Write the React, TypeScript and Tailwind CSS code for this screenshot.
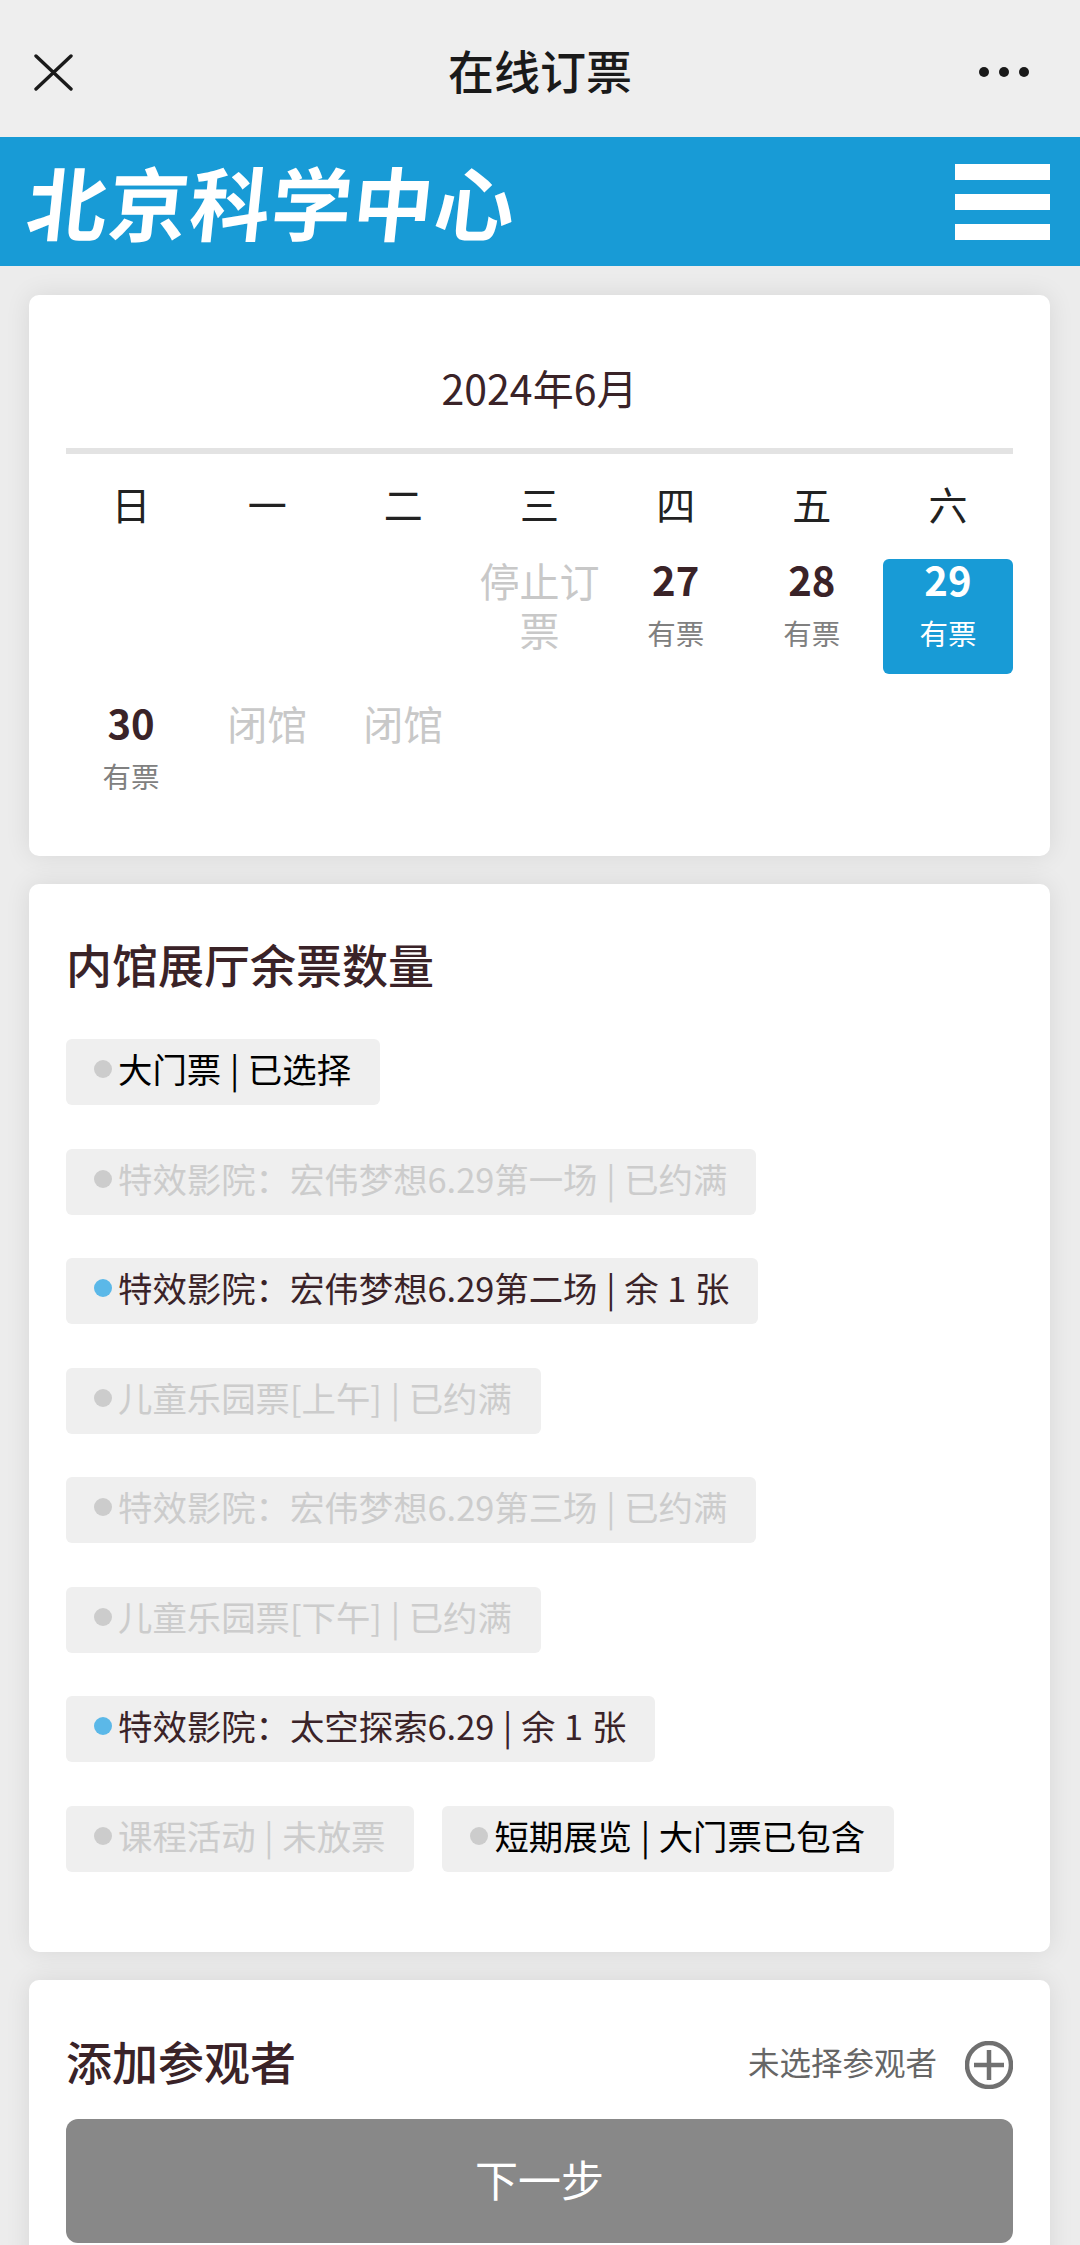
const days = ["日", "一", "二", "三", "四", "五", "六"];

type Tag = { label: string; state: "on" | "off" | "open" };

const tags: Tag[] = [
  { label: "大门票 | 已选择", state: "on" },
  { label: "特效影院：宏伟梦想6.29第一场 | 已约满", state: "off" },
  { label: "特效影院：宏伟梦想6.29第二场 | 余 1 张", state: "open" },
  { label: "儿童乐园票[上午] | 已约满", state: "off" },
  { label: "特效影院：宏伟梦想6.29第三场 | 已约满", state: "off" },
  { label: "儿童乐园票[下午] | 已约满", state: "off" },
  { label: "特效影院：太空探索6.29 | 余 1 张", state: "open" },
  { label: "课程活动 | 未放票", state: "off" },
  { label: "短期展览 | 大门票已包含", state: "on" },
];

function Day({ n, active }: { n: string; active?: boolean }) {
  return (
    <div className={`h-[115px] rounded-[6px] text-center ${active ? "bg-[#189bd6] text-white" : "text-[#3a2328]"}`}>
      <div className="text-[40px] leading-[40px] font-bold">{n}</div>
      <div className={`mt-[16px] text-[28.5px] leading-[36px] ${active ? "text-white" : "text-[#808080]"}`}>有票</div>
    </div>
  );
}

function Closed({ text }: { text: string }) {
  return <div className="-mt-[3px] h-[115px] text-center text-[40px] leading-[49px] text-[#c8c8c8]">{text}</div>;
}

function TagPill({ tag }: { tag: Tag }) {
  const text = tag.state === "on" ? "text-black" : tag.state === "open" ? "text-[#3a2328]" : "text-[#cccccc]";
  return (
    <div className={`flex h-[66px] items-start rounded-[6px] bg-[#efefef] pl-[28px] pr-[29px] pt-[9px] text-[34.4px] leading-[40px] [word-spacing:1px] ${text}`}>
      <span className={`mr-[6px] mt-[12px] h-[18px] w-[18px] shrink-0 rounded-full ${tag.state === "open" ? "bg-[#5bb8e8]" : "bg-[#cccccc]"}`} />
      <span className="whitespace-pre">{tag.label}</span>
    </div>
  );
}

export default function App() {
  return (
    <div className="h-[2245px] overflow-hidden bg-[#ececec] font-['Noto_Sans_CJK_SC','Noto_Sans',sans-serif]">
      <nav className="flex h-[137px] items-center bg-[#eeeeee] px-[34px] pt-[7px]">
        <div className="flex-1">
          <svg width="39" height="37" viewBox="0 0 39 37" fill="none" stroke="#1a1a1a" strokeWidth="3.4" strokeLinecap="round">
            <path d="M2 2L37 35M37 2L2 35" />
          </svg>
        </div>
        <h1 className="mb-[6px] text-[46px] font-medium leading-[56px] text-[#1a1a1a]">在线订票</h1>
        <div className="flex flex-1 justify-end">
          <div className="mr-[17px] flex gap-[10px]">
            <span className="h-[10px] w-[10px] rounded-full bg-[#1a1a1a]" />
            <span className="h-[10px] w-[10px] rounded-full bg-[#1a1a1a]" />
            <span className="h-[10px] w-[10px] rounded-full bg-[#1a1a1a]" />
          </div>
        </div>
      </nav>

      <header className="flex h-[129px] items-center justify-between bg-[#189bd6] pl-[28px] pr-[30px]">
        <div className="-mt-[4px] -skew-x-6 text-[80px] font-bold leading-[90px] tracking-[1.5px] text-white">北京科学中心</div>
        <div className="flex flex-col gap-[14px]">
          <span className="h-[16px] w-[95px] bg-white" />
          <span className="h-[16px] w-[95px] bg-white" />
          <span className="h-[16px] w-[95px] bg-white" />
        </div>
      </header>

      <div className="flex flex-col gap-[28px] pl-[29px] pr-[30px] pt-[29px]">
        <section className="rounded-[10px] bg-white px-[37px] pb-[39px] pt-[67px] shadow-[0_0_26px_rgba(0,0,0,0.09)]">
          <div className="text-center text-[41px] leading-[50px] text-[#3a2328]">2024年6月</div>
          <div className="mt-[36px] h-[6px] bg-[#e3e3e3]" />
          <div className="mt-[24px] grid grid-cols-7 gap-x-[6px]">
            {days.map((d) => (
              <div key={d} className="text-center text-[39px] leading-[50px] text-[#222222]">{d}</div>
            ))}
          </div>
          <div className="mt-[31px] grid grid-cols-7 gap-x-[6px] gap-y-[28px]">
            <div />
            <div />
            <div />
            <Closed text="停止订票" />
            <Day n="27" />
            <Day n="28" />
            <Day n="29" active />
            <Day n="30" />
            <Closed text="闭馆" />
            <Closed text="闭馆" />
          </div>
        </section>

        <section className="h-[1068px] rounded-[10px] bg-white px-[37px] pt-[51px] shadow-[0_0_26px_rgba(0,0,0,0.09)]">
          <h2 className="text-[46px] font-medium leading-[56px] text-[#3a2328]">内馆展厅余票数量</h2>
          <div className="mt-[48px] flex flex-wrap gap-x-[28px] gap-y-[43.5px]">
            {tags.map((t) => (
              <TagPill key={t.label} tag={t} />
            ))}
          </div>
        </section>

        <section className="h-[300px] rounded-[10px] bg-white px-[37px] pt-[54px] shadow-[0_0_26px_rgba(0,0,0,0.09)]">
          <div className="flex h-[56px] items-center justify-between">
            <h2 className="-mt-[5px] text-[46px] font-medium leading-[56px] text-[#3a2328]">添加参观者</h2>
            <div className="flex items-center gap-[28px]">
              <span className="text-[31.5px] text-[#666666]">未选择参观者</span>
              <svg width="48" height="48" viewBox="0 0 48 48" fill="none" stroke="#707070" strokeWidth="4.5" className="mt-[6px]">
                <circle cx="24" cy="24" r="22" />
                <path d="M9 24H39M24 9V39" />
              </svg>
            </div>
          </div>
          <button className="mt-[29px] h-[124px] w-full rounded-[12px] bg-[#888888] pb-[5px] text-[43px] text-white">下一步</button>
        </section>
      </div>
    </div>
  );
}
